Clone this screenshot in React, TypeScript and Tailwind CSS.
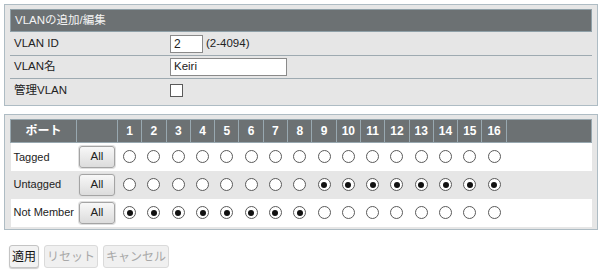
const ports = Array.from({ length: 16 }, (_, i) => i + 1);

const rows = [
  { label: "Tagged", bg: "bg-white", checked: (p: number) => false },
  { label: "Untagged", bg: "bg-[#e6e6e6]", checked: (p: number) => p >= 9 },
  { label: "Not Member", bg: "bg-white", checked: (p: number) => p <= 8 },
];

const Radio = ({ on }: { on: boolean }) => (
  <span className="inline-flex w-[13px] h-[13px] rounded-full border border-[#5a5a5a] bg-white items-center justify-center align-middle">
    {on && <span className="w-[6px] h-[6px] rounded-full bg-[#111]" />}
  </span>
);

export default function App() {
  return (
    <div className="w-[600px] h-[276px] bg-white pt-[4px] text-[11.5px] text-[#222] font-['Liberation_Sans','Noto_Sans_CJK_JP',sans-serif] overflow-hidden">
      {/* VLAN settings */}
      <div className="ml-[4px] w-[594px] border border-[#aebcc4] bg-[#e6e6e6] pt-[4px] px-[5px] pb-[3px]">
        <div className="h-[23px] bg-[#6c7173] border border-[#8fa0a8] text-[#f4f4f4] flex items-center pl-[4px]">
          VLANの追加/編集
        </div>
        <div className="flex items-center h-[24px] border-b border-[#9eaab1] pl-[4px]">
          <div className="w-[156px]">VLAN ID</div>
          <div className="w-[33px] h-[18px] bg-white border border-[#8a8a8a] flex items-center pl-[3px] text-[12px]">2</div>
          <div className="ml-[3px]">(2-4094)</div>
        </div>
        <div className="flex items-center h-[23px] border-b border-[#9eaab1] pl-[4px]">
          <div className="w-[156px]">VLAN名</div>
          <div className="w-[117px] h-[18px] bg-white border border-[#8a8a8a] flex items-center pl-[3px]">Keiri</div>
        </div>
        <div className="flex items-center h-[23px] pl-[4px]">
          <div className="w-[156px]">管理VLAN</div>
          <div className="w-[13px] h-[13px] bg-white border border-[#5a5a5a]" />
        </div>
      </div>

      {/* Port membership */}
      <div className="ml-[4px] mt-[8px] w-[594px] border border-[#aebcc4] bg-[#e6e6e6] pt-[4px] px-[5px] pb-[2px]">
        <table className="w-full table-fixed border-collapse">
          <colgroup>
            <col className="w-[66px]" />
            <col className="w-[41px]" />
            {ports.map((p) => (
              <col key={p} className="w-[24.3px]" />
            ))}
            <col />
          </colgroup>
          <thead>
            <tr className="h-[23px] bg-[#6c7173] text-white text-[12px] font-bold">
              <th className="border border-[#98a8b0] font-bold">ポート</th>
              <th className="border border-[#98a8b0]" />
              {ports.map((p) => (
                <th key={p} className="border border-[#98a8b0] font-bold">
                  {p}
                </th>
              ))}
              <th className="border border-[#98a8b0]" />
            </tr>
          </thead>
          <tbody>
            {rows.map((r) => (
              <tr key={r.label} className={`h-[28px] ${r.bg}`}>
                <td className="pl-[3px] text-[11px] whitespace-nowrap">{r.label}</td>
                <td className="text-center">
                  <button className="w-[36px] h-[22px] rounded-[3px] border border-[#a4a4a4] bg-gradient-to-b from-[#f8f8f8] to-[#dcdcdc] shadow-[0_0_0_1px_#e0e0e0] text-[11.5px] text-[#222]">
                    All
                  </button>
                </td>
                {ports.map((p) => (
                  <td key={p} className="text-center leading-none">
                    <Radio on={r.checked(p)} />
                  </td>
                ))}
                <td />
              </tr>
            ))}
          </tbody>
        </table>
      </div>

      {/* Actions */}
      <div className="flex gap-[5px] ml-[9px] mt-[15px] font-['Noto_Sans_CJK_JP',sans-serif] text-[12px]">
        <button className="h-[23px] px-[2px] rounded-[3px] border border-[#c4c4c4] bg-[#f2f2f2] text-[#111] shadow-[0_1px_1px_#ccc]">適用</button>
        <button className="h-[23px] px-[2px] rounded-[3px] border border-[#dadada] bg-[#f0f0f0] text-[#a8a8a8]">リセット</button>
        <button className="h-[23px] px-[2px] rounded-[3px] border border-[#dadada] bg-[#f0f0f0] text-[#a8a8a8]">キャンセル</button>
      </div>
    </div>
  );
}
